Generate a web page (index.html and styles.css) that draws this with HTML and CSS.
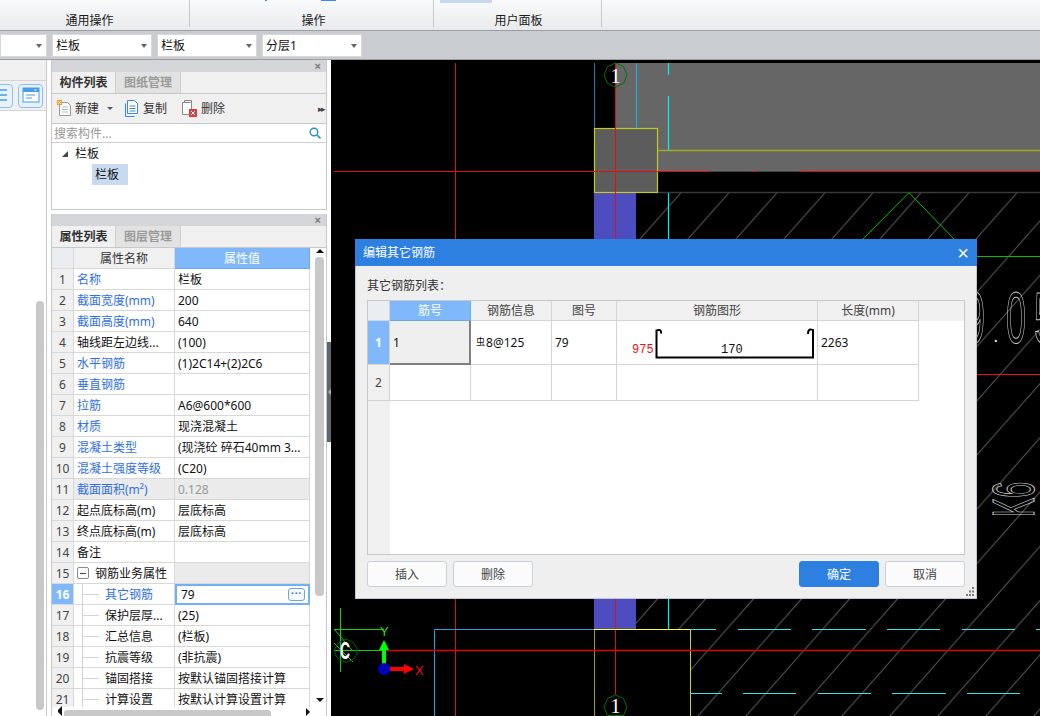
FILE: index.html
```html
<!DOCTYPE html>
<html lang="zh">
<head>
<meta charset="utf-8">
<title>编辑其它钢筋</title>
<link rel="stylesheet" href="styles.css">
</head>
<body>
<div class="app">
  <header class="ribbon">
    <div class="group g1"><span class="group-label">通用操作</span></div>
    <div class="group g2"><i class="bit b1"></i><i class="bit b2"></i><span class="group-label">操作</span></div>
    <div class="group g3"><i class="bit b3"></i><span class="group-label">用户面板</span></div>
  </header>
  <div class="selectbar">
    <div class="select s0"><span></span><i class="caret"></i></div>
    <div class="select"><span>栏板</span><i class="caret"></i></div>
    <div class="select"><span>栏板</span><i class="caret"></i></div>
    <div class="select"><span>分层1</span><i class="caret"></i></div>
  </div>
  <main class="main">
    <aside class="left-pane">
      <div class="pane-head"></div>
      <div class="pane-icons">
        <span class="pane-icon"><svg width="23" height="21" viewBox="0 0 23 21"><path d="M5 5h13M5 10h13M5 15h13" stroke="#4a9be8" stroke-width="1.4"/></svg></span>
        <span class="pane-icon"><svg width="23" height="21" viewBox="0 0 23 21"><rect x="4" y="3" width="16" height="14" fill="#fff" stroke="#4a9be8"/><rect x="4" y="3" width="16" height="4" fill="#4a9be8"/><path d="M7 10h9M7 13h6" stroke="#4a9be8"/><path d="M15 4.500h3l-1.500 1.500z" fill="#fff"/></svg></span>
      </div>
      <div class="pane-body"><div class="pane-thumb"></div></div>
    </aside>

    <div class="panels">
      <section class="panel panel-top">
        <div class="panel-head"><span class="panel-x">×</span></div>
        <div class="tabs"><span class="tab on">构件列表</span><span class="tab">图纸管理</span></div>
        <div class="tools">
          <svg class="t-icon i1" width="15" height="17" viewBox="0 0 15 17"><path d="M2.500 2.500h8l3 3v10h-11z" fill="#fff" stroke="#999"/><path d="M5 7h6M5 9.500h6M5 12h6" stroke="#bbb"/><rect x="0" y="0" width="5" height="5" fill="#f0a030"/><path d="M1 1l3 3M4 1L1 4" stroke="#ffe8b0"/></svg>
          <span class="t-label">新建</span><i class="t-caret"></i>
          <svg class="t-icon i2" width="13" height="17" viewBox="0 0 13 17"><path d="M2.500 .5h7l3 3v10h-10z" fill="#fff" stroke="#3a8ad8"/><path d="M.5 3.500v13h9" fill="none" stroke="#3a8ad8"/><path d="M4.500 6h6M4.500 8.500h6M4.500 11h6" stroke="#3a8ad8"/></svg>
          <span class="t-label">复制</span>
          <svg class="t-icon i3" width="15" height="17" viewBox="0 0 15 17"><path d="M2.500 .5h7v3h-7z" fill="none" stroke="#888"/><path d="M.5 2.500h8l1 1v11H.5z" fill="#fff" stroke="#888"/><rect x="7" y="9" width="8" height="8" fill="#d84040"/><path d="M9 11l4 4M13 11l-4 4" stroke="#fff"/></svg>
          <span class="t-label">删除</span>
          <span class="t-more">▸▸</span>
        </div>
        <div class="search"><span>搜索构件...</span><svg width="12" height="12" viewBox="0 0 12 12"><circle cx="5" cy="5" r="3.800" fill="none" stroke="#2a8fc8" stroke-width="1.400"/><path d="M8 8l3.500 3.500" stroke="#2a8fc8" stroke-width="1.600"/></svg></div>
        <div class="tree">
          <div class="tree-root"><i class="tree-arrow"></i><span>栏板</span></div>
          <div class="tree-leaf">栏板</div>
        </div>
      </section>

      <section class="panel panel-bottom">
        <div class="panel-head"><span class="panel-x">×</span></div>
        <div class="tabs"><span class="tab on">属性列表</span><span class="tab">图层管理</span></div>
        <div class="prop-wrap">
          <div class="prop-main">
            <div class="prop-table">
              <div class="pr head"><div class="c n"></div><div class="c k">属性名称</div><div class="c v hl">属性值</div></div>
              <div class="pr"><div class="c n">1</div><div class="c k blue">名称</div><div class="c v">栏板</div></div>
              <div class="pr"><div class="c n">2</div><div class="c k blue">截面宽度(mm)</div><div class="c v">200</div></div>
              <div class="pr"><div class="c n">3</div><div class="c k blue">截面高度(mm)</div><div class="c v">640</div></div>
              <div class="pr"><div class="c n">4</div><div class="c k">轴线距左边线...</div><div class="c v">(100)</div></div>
              <div class="pr"><div class="c n">5</div><div class="c k blue">水平钢筋</div><div class="c v">(1)2C14+(2)2C6</div></div>
              <div class="pr"><div class="c n">6</div><div class="c k blue">垂直钢筋</div><div class="c v"></div></div>
              <div class="pr"><div class="c n">7</div><div class="c k blue">拉筋</div><div class="c v">A6@600*600</div></div>
              <div class="pr"><div class="c n">8</div><div class="c k blue">材质</div><div class="c v">现浇混凝土</div></div>
              <div class="pr"><div class="c n">9</div><div class="c k blue">混凝土类型</div><div class="c v">(现浇砼 碎石40mm 3...</div></div>
              <div class="pr"><div class="c n">10</div><div class="c k blue">混凝土强度等级</div><div class="c v">(C20)</div></div>
              <div class="pr"><div class="c n">11</div><div class="c k blue shade">截面面积(m²)</div><div class="c v shade muted">0.128</div></div>
              <div class="pr"><div class="c n">12</div><div class="c k">起点底标高(m)</div><div class="c v">层底标高</div></div>
              <div class="pr"><div class="c n">13</div><div class="c k">终点底标高(m)</div><div class="c v">层底标高</div></div>
              <div class="pr"><div class="c n">14</div><div class="c k">备注</div><div class="c v"></div></div>
              <div class="pr"><div class="c n">15</div><div class="c k group-k"><i class="minus"></i>钢筋业务属性</div><div class="c v shade"></div></div>
              <div class="pr"><div class="c n cur">16</div><div class="c k child blue"><i class="branch"></i>其它钢筋</div><div class="c v edit"><span>79</span><i class="more">···</i></div></div>
              <div class="pr"><div class="c n">17</div><div class="c k child"><i class="branch"></i>保护层厚...</div><div class="c v">(25)</div></div>
              <div class="pr"><div class="c n">18</div><div class="c k child"><i class="branch"></i>汇总信息</div><div class="c v">(栏板)</div></div>
              <div class="pr"><div class="c n">19</div><div class="c k child"><i class="branch"></i>抗震等级</div><div class="c v">(非抗震)</div></div>
              <div class="pr"><div class="c n">20</div><div class="c k child"><i class="branch"></i>锚固搭接</div><div class="c v">按默认锚固搭接计算</div></div>
              <div class="pr"><div class="c n">21</div><div class="c k child"><i class="branch"></i>计算设置</div><div class="c v">按默认计算设置计算</div></div>
            </div>
            <div class="vscroll"><i class="arr up"></i><div class="vthumb"></div><i class="arr down"></i></div>
          </div>
          <div class="hscroll"><i class="arr left"></i><div class="hthumb"></div><i class="arr right"></i></div>
        </div>
      </section>
    </div>

    <div class="splitter"><div class="handle"><i></i></div></div>

    <svg class="canvas" width="709" height="656" viewBox="331 60 709 656">
      <defs>
        <pattern id="hatch" patternUnits="userSpaceOnUse" x="633" y="192.700" width="48" height="54.240">
          <path d="M48 0L0 54.240M96 0L48 54.240M48 -54.240L-48 54.240" stroke="#5a5a5a" stroke-width="1" fill="none"/>
        </pattern>
      </defs>
      <rect x="331" y="60" width="709" height="656" fill="#000"/>
      <rect x="616" y="63" width="424" height="108" fill="#666"/>
      <rect x="636" y="193" width="404" height="436" fill="url(#hatch)"/>
      <rect x="690" y="629" width="350" height="87" fill="url(#hatch)"/>
      <rect x="594" y="193" width="42" height="436" fill="#4d4dbf"/>
      <rect x="594.500" y="128.500" width="63" height="64" fill="#5c5c5c" stroke="#c8c820" stroke-width="1.200"/>
      <g fill="none" stroke-width="1">
        <path d="M658 150.500H1040" stroke="#a8a820" stroke-width="1.500"/>
        <path d="M658 192.500H1040" stroke="#3a3a3a" stroke-width="1.500"/>
        <path d="M594.500 63V128" stroke="#0a80a8"/>
        <path d="M636.500 63V128" stroke="#18b0f0"/>
        <path d="M668.500 63V75M668.500 96V150M668.500 193V629" stroke="#00f0f0" stroke-width="1.200"/>
        <path d="M455.500 63V716M615.500 63V695" stroke="#e01010"/>
        <path d="M334 171.500H1040" stroke="#e01010"/>
        <path d="M709 171.500H751M756 171.500H799" stroke="#444" stroke-width="1.200"/>
        <path d="M909 192.700L862 240M909 192.700L955 240" stroke="#00c000"/>
        <path d="M977 256.500H1040" stroke="#00c000" stroke-width="1.200"/>
        <path d="M977 374.500H1040" stroke="#f01010" stroke-width="1.200"/>
        <path d="M434.500 716V629.500H594" stroke="#18a8e0"/>
        <path d="M594.500 629V716" stroke="#a0a000"/>
        <path d="M690.500 629V716" stroke="#d0d020"/>
        <path d="M594 629.500H690" stroke="#ffff30" stroke-width="1.200"/>
        <path d="M690 629.500H716M738 629.500H791M812 629.500H866M887 629.500H940M962 629.500H1015M1036 629.500H1040M690 693.500H722M743 693.500H796M818 693.500H871M892 693.500H946M967 693.500H1020" stroke="#30e8f0"/>
        <path d="M384 650.500H1040" stroke="#e00000" stroke-width="1.400"/>
        <path d="M340.500 608V672M334 629.500H384M334 650.500H384M334 629L352 650M334 643L353 662" stroke="#10d010"/>
        <path d="M346 639l7 3.500 4 6v6l-4 5-7 3-7-3-4-5v-6l4-6z" stroke="#006800"/>
        <path d="M615.500 63l8 3.500 3.500 8.500-3.500 8.500-8 3.500-8-3.500-3.500-8.500 3.500-8.500z" stroke="#007000"/>
        <path d="M615.500 695l8 3.500 3.500 8.500-3.500 8.500H607.500L604 707l3.500-8.500z" stroke="#007000"/>
      </g>
      <rect x="382" y="647" width="4" height="20" fill="#00ff00"/>
      <path d="M384 640l5 10h-10z" fill="#00ff00"/>
      <rect x="390" y="667" width="15" height="4" fill="#ff0000"/>
      <path d="M414 669l-10 5v-10z" fill="#ff0000"/>
      <circle cx="384" cy="669" r="6" fill="#0000c0"/>
      <text class="cad-small green" x="380" y="636">Y</text>
      <text class="cad-small red" x="415" y="675">X</text>
      <text class="cad-c" transform="translate(340 659) scale(.6 1)" x="0" y="0">C</text>
      <text class="cad-mark" x="615.500" y="83" text-anchor="middle">1</text>
      <text class="cad-mark" x="615.500" y="713" text-anchor="middle">1</text>
      <text class="cad-big" transform="translate(1006 343) scale(.5 1)" x="0" y="0">0</text>
      <text class="cad-big" transform="translate(1034 343) scale(.5 1)" x="0" y="0">5</text>
      <text class="cad-big" transform="translate(965 343) scale(.5 1)" x="0" y="0">9</text>
      <text class="cad-dot" x="993" y="342">.</text>
      <text class="cad-k" transform="translate(1034 517) rotate(-90) scale(.48 1)" x="0" y="0">K6</text>
    </svg>

    <div class="dialog">
      <div class="dlg-title"><span>编辑其它钢筋</span><span class="dlg-x">×</span></div>
      <div class="dlg-body">
        <div class="dlg-label">其它钢筋列表：</div>
        <div class="rebar-table">
          <div class="rr rr-head">
            <div class="rc rn"></div><div class="rc hl">筋号</div><div class="rc">钢筋信息</div><div class="rc">图号</div><div class="rc wide">钢筋图形</div><div class="rc">长度(mm)</div>
          </div>
          <div class="rr rr-one">
            <div class="rc rn cur">1</div>
            <div class="rc sel">1</div>
            <div class="rc left"><span class="grade">虫</span>8@125</div>
            <div class="rc left">79</div>
            <div class="rc wide shape">
              <svg width="200" height="43" viewBox="0 0 200 43">
                <path d="M39.500 13V8.500Q39.500 9 42 9T44 12.500M39.500 9V36.500H196V9M196 9Q196 8.500 193.500 8.500T191 13" fill="none" stroke="#000" stroke-width="2"/>
                <text class="sh-num red" x="15" y="32">975</text>
                <text class="sh-num" x="104" y="32">170</text>
              </svg>
            </div>
            <div class="rc left">2263</div>
          </div>
          <div class="rr rr-two">
            <div class="rc rn">2</div><div class="rc"></div><div class="rc"></div><div class="rc"></div><div class="rc wide"></div><div class="rc"></div>
          </div>
        </div>
        <div class="dlg-foot">
          <button class="btn">插入</button>
          <button class="btn">删除</button>
          <span class="spacer"></span>
          <button class="btn primary">确定</button>
          <button class="btn">取消</button>
        </div>
      </div>
      <svg class="grip" width="10" height="10" viewBox="0 0 10 10"><path d="M7 0h2v2H7zM4 3.500h2v2H4zM7 3.500h2v2H7zM1 7h2v2H1zM4 7h2v2H4zM7 7h2v2H7z" fill="#777"/></svg>
    </div>
  </main>
</div>
</body>
</html>
```
FILE: styles.css
```css
* { box-sizing: border-box; }
html, body { margin: 0; padding: 0; }
body {
  width: 1040px;
  height: 716px;
  overflow: hidden;
  background: #fff;
  font: 12px/1.2 "Noto Sans", "Noto Sans CJK SC", sans-serif;
  color: #111;
}
i { display: block; font-style: normal; }
.app { display: flex; flex-direction: column; width: 1040px; height: 716px; overflow: hidden; position: relative; }

/* ribbon */
.ribbon {
  display: flex;
  height: 31px;
  flex: none;
  background: linear-gradient(#f9fafa, #e8ebed);
  border-bottom: 1px solid #9a9ea3;
}
.group {
  display: flex;
  justify-content: center;
  align-items: flex-end;
  height: 27px;
  border-right: 1px solid #c8c8c8;
  position: relative;
  color: #1a1a1a;
}
.g1 { width: 190px; padding-right: 10px; }
.g2 { width: 244px; padding-left: 4px; }
.g3 { width: 168px; padding-left: 2px; }
.group-label { line-height: 16px; margin-bottom: -2px; }
.bit { position: absolute; top: 0; height: 1px; background: #3a8ae0; }
.b1 { left: 75px; width: 2px; }
.b2 { left: 131px; width: 15px; }
.b3 { left: 6px; width: 52px; height: 3px; background: #c5d9f1; }

/* select bar */
.selectbar {
  display: flex;
  gap: 5px;
  height: 29px;
  flex: none;
  padding: 3px 0 0;
  background: #c9ccd1;
  border-bottom: 1px solid #9a9da2;
}
.select {
  display: flex;
  align-items: center;
  justify-content: space-between;
  width: 100px;
  height: 23px;
  padding: 0 4px 0 3px;
  background: #fff;
  border: 1px solid #d8d8d8;
  font-size: 12px;
}
.select span { padding-top: 2px; }
.s0 { width: 47px; }
.caret { width: 0; height: 0; border: 3px solid transparent; border-top: 4px solid #666; border-bottom: 0; }

/* main */
.main { display: flex; flex: 1; min-height: 0; position: relative; }

.left-pane {
  width: 47px;
  flex: none;
  display: flex;
  flex-direction: column;
  border-right: 1px solid #c8c8c8;
}
.pane-head { height: 21px; flex: none; background: #f0f0f0; border-bottom: 1px solid #d4d4d4; }
.pane-icons {
  height: 30px;
  flex: none;
  display: flex;
  justify-content: flex-end;
  gap: 5px;
  padding: 3px 3px 0 0;
  background: #f0f0f0;
  border-bottom: 1px solid #d4d4d4;
  overflow: hidden;
}
.pane-icon {
  flex: none;
  width: 25px;
  height: 24px;
  display: block;
  background: #e6f2fd;
  border: 1px solid #8cc0f4;
  border-radius: 4px;
}
.pane-icon svg { display: block; }
.pane-body { flex: 1; display: flex; justify-content: flex-end; padding: 190px 2px 6px 0; }
.pane-thumb { width: 8px; height: 100%; background: #c8c8c8; border-radius: 4px; }

.panels { width: 276px; flex: none; margin-left: 4px; display: flex; flex-direction: column; gap: 4px; }
.panel { display: flex; flex-direction: column; border: 1px solid #c8c8c8; border-top: 0; }
.panel-top { height: 150px; flex: none; }
.panel-bottom { flex: 1; min-height: 0; overflow: hidden; border-bottom: 0; }
.panel-head { height: 12px; flex: none; background: #d4d5d9; display: flex; justify-content: flex-end; padding-right: 5px; }
.panel-x { font: bold 11px/12px "Liberation Sans", sans-serif; color: #777; }
.tabs { height: 22px; flex: none; display: flex; background: #f0f0f0; border-bottom: 1px solid #c8c8c8; }
.tab {
  width: 65px;
  line-height: 21px;
  text-align: center;
  font-weight: 700;
  color: #9a9a9a;
  background: #e2e2e2;
  border-right: 1px solid #cfcfcf;
}
.tab.on { width: 64px; color: #333; background: #f0f0f0; }

.tools {
  height: 30px;
  flex: none;
  display: flex;
  align-items: center;
  padding-left: 5px;
  background: #f0f0f0;
  border-bottom: 1px solid #c8c8c8;
  color: #333;
}
.t-label { margin-left: 4px; padding-top: 2px; }
.t-caret { margin-left: 8px; width: 0; height: 0; border: 3px solid transparent; border-top: 3px solid #555; border-bottom: 0; }
.i1 { margin-right: -1px; }
.i2 { margin-left: 12px; margin-right: 1px; }
.i3 { margin-left: 15px; }
.t-more { margin-left: auto; margin-right: 0; font-size: 9px; letter-spacing: -2px; color: #444; width: 8px; padding-top: 2px; }

.search {
  height: 19px;
  flex: none;
  display: flex;
  align-items: center;
  justify-content: space-between;
  padding: 0 5px 0 2px;
  color: #999;
  border-bottom: 1px solid #d0d0d0;
  background: #fff;
}
.search span { padding-top: 2px; }
.tree { flex: 1; background: #fff; padding: 1px 0 0 10px; }
.tree-root { display: flex; align-items: center; height: 20px; gap: 7px; color: #111; }
.tree-arrow { width: 0; height: 0; border-style: solid; border-width: 0 0 6px 6px; border-color: transparent transparent #444 transparent; }
.tree-leaf { margin: 0 0 0 30px; width: 36px; height: 21px; line-height: 21px; padding-left: 3px; background: #c8daf0; }

/* property table */
.prop-wrap { flex: 1; min-height: 0; display: flex; flex-direction: column; background: #fff; }
.prop-main { display: flex; height: 460px; flex: none; overflow: hidden; }
.prop-table { width: 258px; flex: none; overflow: hidden; height: 459px; }
.pr { display: grid; grid-template-columns: 22px 101px 135px; height: 21px; }
.c {
  display: flex;
  align-items: center;
  padding: 2px 0 0 3px;
  white-space: nowrap;
  overflow: hidden;
  border-right: 1px solid #d8d8d8;
  border-bottom: 1px solid #d8d8d8;
}
.n { justify-content: center; padding: 2px 0 0; background: #f0f0f0; color: #444; font-size: 12px; }
.head .c { justify-content: center; background: #f0f0f0; color: #333; padding: 2px 0 0; }
.head .n { background: #eaeef2; }
.head .hl { background: #7fb9fb; color: #fff; border-color: #6aa8ee; }
.blue { color: #2f6fe4; }
.shade { background: #ebebeb; }
.muted { color: #999; }
.group-k { gap: 6px; }
.minus { flex: none; width: 12px; height: 12px; margin-top: -2px; border: 1px solid #888; border-radius: 2px; background: linear-gradient(#444, #444) center/6px 1px no-repeat #fff; }
.child { padding-left: 8px; }
.branch {
  flex: none;
  align-self: flex-start;
  width: 23px;
  height: 21px;
  margin-top: -2px;
  background:
    linear-gradient(#d4d4d4, #d4d4d4) 0 0 / 1px 100% no-repeat,
    linear-gradient(#d4d4d4, #d4d4d4) 1px 50% / 16px 1px no-repeat;
}
.n.cur { background: #7fb9fb; color: #fff; font-weight: 700; }
.edit { border: 2px solid #6fb0f6; justify-content: space-between; padding: 0 3px 0 4px; }
.edit span { padding-top: 1px; }
.more {
  width: 17px;
  height: 13px;
  border: 1px solid #6fa4e0;
  border-radius: 3px;
  background: #f6f9fd;
  font: bold 11px/9px "Liberation Sans", sans-serif;
  color: #4a80c0;
  text-align: center;
}
.vscroll { flex: 1; display: flex; flex-direction: column; align-items: center; padding: 1px 2px 0 5px; }
.vthumb { width: 9px; height: 339px; margin-top: 4px; background: #c8c8c8; border-radius: 4px; }
.arr { width: 0; height: 0; border: 4px solid transparent; flex: none; }
.arr.up { border-bottom: 4px solid #111; border-top: 0; }
.arr.down { border-top: 4px solid #111; border-bottom: 0; margin-top: 102px; }
.hscroll { height: 8px; flex: 1; display: flex; align-items: flex-end; padding: 0 16px 0 3px; }
.hthumb { width: 207px; height: 6px; margin-left: 2px; background: #c8c8c8; border-radius: 3px 3px 0 0; }
.arr.left { border-right: 4px solid #111; border-left: 0; }
.arr.right { border-left: 4px solid #111; border-right: 0; margin-left: auto; }

.splitter { width: 4px; flex: none; padding-top: 282px; background: #fff; }
.handle { height: 100px; background: #5f6670; display: flex; align-items: center; justify-content: center; }
.handle i { width: 0; height: 0; border: 3px solid transparent; border-right: 3px solid #aaa; border-left: 0; }
.canvas { display: block; flex: none; }
.cad-small { font: 13px "Liberation Sans", sans-serif; }
.green { fill: #20e020; }
.red { fill: #f01010; }
.cad-mark { font: 20px "Liberation Serif", serif; fill: #fff; }
.cad-c { font: bold 23px "Liberation Sans", sans-serif; fill: #fff; }
.cad-big { font: 72px "Liberation Sans", sans-serif; fill: none; stroke: #ccc; stroke-width: .8px; vector-effect: non-scaling-stroke; }
.cad-dot { font: 20px "Liberation Sans", sans-serif; fill: #ddd; }
.cad-k { font: 60px "Liberation Sans", sans-serif; fill: none; stroke: #ccc; stroke-width: .8px; vector-effect: non-scaling-stroke; }

/* dialog */
.dialog {
  position: absolute;
  left: 355px;
  top: 179px;
  width: 622px;
  height: 360px;
  display: flex;
  flex-direction: column;
  background: #efefef;
  border: 1px solid #c0c8d4;
  border-top: 0;
}
.dlg-title {
  height: 27px;
  flex: none;
  margin: 0 -1px;
  padding: 2px 8px 0 8px;
  display: flex;
  align-items: center;
  justify-content: space-between;
  background: #2d7fe0;
  color: #fff;
  font-size: 12px;
}
.dlg-x { font: 20px/20px "Liberation Sans", sans-serif; margin-top: -2px; }
.dlg-body { flex: 1; display: flex; flex-direction: column; padding: 11px; min-height: 0; }
.dlg-label { height: 23px; flex: none; color: #333; line-height: 17px; }
.rebar-table {
  flex: 1;
  min-height: 0;
  background: linear-gradient(#f0f0f0, #f0f0f0) 0 0 / 22px 100% no-repeat #fff;
  border: 1px solid #c8c8c8;
}
.rr { display: grid; grid-template-columns: 22px 81px 81px 65px 201px 101px; }
.rr-head { height: 20px; background: #f0f0f0; }
.rr-one { height: 44px; }
.rr-two { height: 36px; }
.rc {
  display: flex;
  align-items: center;
  justify-content: center;
  border-right: 1px solid #d4d4d4;
  border-bottom: 1px solid #d4d4d4;
  background: #fff;
  color: #111;
  min-width: 0;
}
.rr-head .rc { background: #f0f0f0; color: #444; padding-top: 2px; }
.rr-head .rc.hl { background: #7fb9fb; color: #fff; border-color: #6aa8ee; }
.rn { background: #f0f0f0; color: #444; padding-top: 2px; }
.rr-head .rn { background: #eaeef2; }
.rc.cur { background: #7fb9fb; color: #fff; font-weight: 700; }
.sel { justify-content: flex-start; padding: 2px 0 0 3px; background: #efefef; border-right: 2px solid #808080; border-bottom: 2px solid #808080; }
.left { justify-content: flex-start; padding: 2px 0 0 3px; }
.grade { font-size: 9px; line-height: 9px; margin: 0 1px 4px 2px; }
.shape { display: block; background: #fff; }
.shape svg { display: block; }
.sh-num { font: 12px "Liberation Mono", monospace; fill: #111; }
.sh-num.red { fill: #f01010; }
.dlg-foot { height: 26px; flex: none; margin-top: 6px; display: flex; gap: 6px; }
.spacer { flex: 1; }
.btn {
  width: 80px;
  height: 26px;
  padding: 0;
  font: 12px "Noto Sans", "Noto Sans CJK SC", sans-serif;
  color: #444;
  background: #fbfbfb;
  border: 1px solid #c8d0dc;
  border-radius: 3px;
}
.btn.primary { background: #2d7fe0; border-color: #2d7fe0; color: #fff; }
.grip { position: absolute; right: 1px; bottom: 1px; }
```
